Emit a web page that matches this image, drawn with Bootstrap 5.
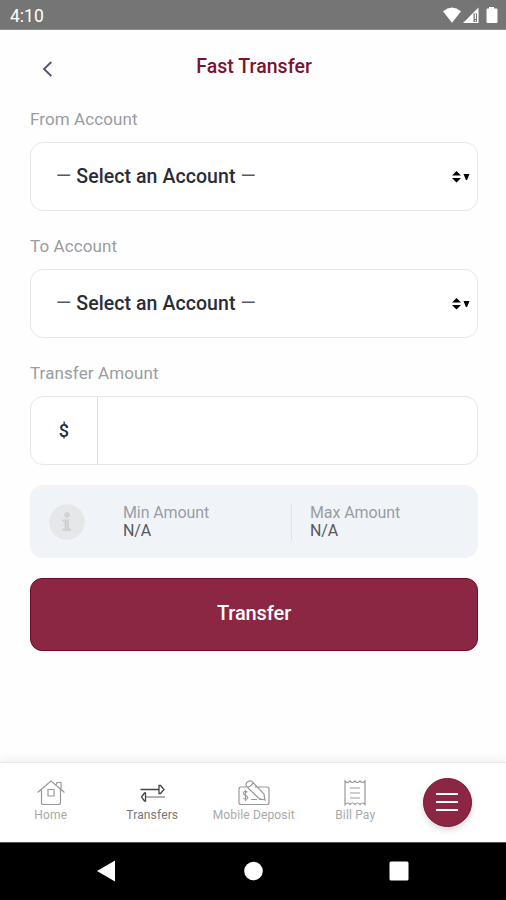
<!DOCTYPE html>
<html lang="en">
<head>
<meta charset="utf-8">
<meta name="viewport" content="width=device-width, initial-scale=1">
<title>Fast Transfer</title>
<link href="https://cdn.jsdelivr.net/npm/bootstrap@5.3.0/dist/css/bootstrap.min.css" rel="stylesheet">
<style>
body{font-family:Roboto,"Liberation Sans",sans-serif;height:900px;overflow:hidden;background:#fefefe}
svg{display:block;flex:none}
.status{height:30px;background:#757575;font-size:17.5px;line-height:30px;padding:2px 7px 0 10px;border-bottom:1px solid #8c8c8c}
.status svg{margin-top:-2px}
.topbar{height:72px;padding:0 30px}
.topbar .back{width:36px;padding:5px 0 0 12px}
.topbar h1{font-size:19.5px;font-weight:500;color:#7d1230;letter-spacing:.05px;padding:2px 34px 0 0}
.flabel{height:34px;line-height:34px;margin-bottom:6px;font-size:17px;color:#9a9ca2;letter-spacing:.1px}
.field{height:69px;border:1.5px solid #e7e7e8;border-radius:13px;background:#fff;margin-bottom:18px;color:#292d38;font-size:19.5px;font-weight:500;letter-spacing:.08px;overflow:hidden}
.picker{padding:1px 6px 0 25px}
.dash{font-weight:400;color:#55585f}
.prefix{width:67px;height:100%;border-right:1.5px solid #dfe0e1;font-size:18px}
.limits{height:73px;background:#f0f4f8;border-radius:13px;padding:1px 0 0 19px;margin:20px 0;font-size:16px;line-height:18px;letter-spacing:-.1px;color:#9a9da5}
.limits b{font-weight:400;color:#555862}
.limits .min{width:168.5px;margin-left:38px;height:37px;border-right:1.5px solid #dfe3e7}
.limits .max{margin-left:18.5px;height:37px}
.send,.send:hover{height:73px;border-radius:12px;background:#8b2743;border:1.5px solid #76082b;color:#fff;font-size:20px;font-weight:500;letter-spacing:-.1px;line-height:68px;padding:0 0 3px}
.tabs{height:80px;background:#fff;border-top:1px solid #e9e9e9;box-shadow:0 -3px 10px rgba(0,0,0,.06);font-size:12px;line-height:14px;color:#a9a9a9;letter-spacing:.15px}
.tabs .tab{width:101.5px;padding-top:16px}
.tabs .on{color:#777}
.menu,.menu:hover{width:49px;height:49px;background:#8b2743;border:1px solid #7c1233;box-shadow:0 3px 6px rgba(0,0,0,.15)}
.sysnav{height:58px;background:#000;border-top:1px solid #555}
</style>
</head>
<body class="d-flex flex-column">
<header class="status d-flex justify-content-between align-items-center text-white">
  <span>4:10</span>
  <svg width="58" height="20" viewBox="0 0 58 20" fill="#fff"><path d="M2 6.200Q11 -1 20 6.200L11.500 17.200Q11 17.700 10.500 17.200Z"/><path d="M22 18 37.500 2.500V18Z"/><path d="M32.500 8.500h3.500v8.500h-3.500z" fill="#757575"/><path d="M33.800 9h1.200v5h-1.200zM33.800 15h1.200v1.500h-1.200z"/><path d="M48 2h5v1.500h2.500q1 0 1 1V17q0 1-1 1h-9q-1 0-1-1V4.500q0-1 1-1H48z"/></svg>
</header>
<div class="topbar d-flex align-items-center">
  <div class="back"><svg width="12" height="18" viewBox="0 0 12 18" fill="none" stroke="#50536b" stroke-width="1.800"><path d="M9.300 2 2 9l7.300 7"/></svg></div>
  <h1 class="flex-fill text-center m-0">Fast Transfer</h1>
</div>
<main class="flex-fill d-flex flex-column" style="padding:0 28px 0 30px">
  <div class="flabel">From Account</div>
  <div class="field picker d-flex align-items-center justify-content-between" role="button">
    <span><span class="dash">—</span> Select an Account <span class="dash">—</span></span>
    <svg width="20" height="14" viewBox="0 0 20 14"><path d="M5.500 1 10 5.500H1zM1 8h9l-4.500 4.500zM12.500 4h6l-2.400 6h-1.200z"/></svg>
  </div>
  <div class="flabel">To Account</div>
  <div class="field picker d-flex align-items-center justify-content-between" role="button">
    <span><span class="dash">—</span> Select an Account <span class="dash">—</span></span>
    <svg width="20" height="14" viewBox="0 0 20 14"><path d="M5.500 1 10 5.500H1zM1 8h9l-4.500 4.500zM12.500 4h6l-2.400 6h-1.200z"/></svg>
  </div>
  <div class="flabel">Transfer Amount</div>
  <div class="field d-flex mb-0">
    <div class="prefix d-flex align-items-center justify-content-center">$</div>
  </div>
  <div class="limits d-flex align-items-center">
    <svg width="36" height="36" viewBox="0 0 36 36"><circle cx="18" cy="18" r="17.800" fill="#e5e7e9"/><circle cx="18" cy="11" r="2.700" fill="#d0d2d5"/><path d="M13.500 15.500h6.500v9h2v2.500h-8.500v-2.500h2v-6.500h-2z" fill="#d0d2d5"/></svg>
    <div class="min">Min Amount<br><b>N/A</b></div>
    <div class="max">Max Amount<br><b>N/A</b></div>
  </div>
  <button class="send btn w-100" type="button">Transfer</button>
</main>
<nav class="tabs d-flex text-center">
  <div class="tab d-flex flex-column align-items-center"><svg width="30" height="29" viewBox="0 0 30 29" fill="none" stroke="#999" stroke-width="1.200"><path d="M1.500 13.500 15 2 28.500 13.500M5.500 10.500v13q0 2 2 2h15q2 0 2-2V10.500M20 6l1-2.500h4v7M12 10.500h6v6.500h-6z"/></svg>Home</div>
  <div class="tab on d-flex flex-column align-items-center"><svg width="30" height="29" viewBox="0 0 30 29" fill="none" stroke-width="1.300"><path d="M28 18H8.500" stroke="#888"/><path d="M3.500 10.500H21.500M22 6.500v8h1.500l3.500-4-3.500-4zM8.500 14v8H7.500L4.500 18l3-4z" stroke="#444"/></svg>Transfers</div>
  <div class="tab d-flex flex-column align-items-center text-nowrap"><svg width="34" height="29" viewBox="0 0 34 29" fill="none" stroke="#999" stroke-width="1.200"><path d="M9 8H4q-2 0-2 2V23.500q0 2 2 2h26q2 0 2-2V10q0-2-2-2H18M9.500 7.500Q8 4 11 2.500q3-1.500 5 1L27 15l1 6-6-1.500zM10 8q4 0 6-4M14 20.500h6M22 20.500h6M10.500 13q-4-1.500-4 1 0 2 2 2.500 3 1 2 3-1 1.500-4 0M8.500 11v11"/></svg>Mobile Deposit</div>
  <div class="tab d-flex flex-column align-items-center"><svg width="26" height="29" viewBox="0 0 26 29" fill="none" stroke="#999" stroke-width="1.200"><path d="M3 2q2.500 3 5 0 2.500 3 5 0 2.500 3 5 0 2.500 3 5 0v23.500q-2.500-3-5 0-2.500-3-5 0-2.500-3-5 0-2.500-3-5 0zM8 9h10M8 14h10M8 19h10"/></svg>Bill Pay</div>
  <div class="flex-fill d-flex justify-content-center align-items-center" style="padding:0 18px 1px 0"><button type="button" aria-label="Menu" class="menu btn rounded-circle p-0 d-flex align-items-center justify-content-center"><svg width="22" height="20" viewBox="0 0 22 20" stroke="#fff" stroke-width="2"><path d="M0 2h22M0 10h22M0 18h22"/></svg></button></div>
</nav>
<footer class="sysnav d-flex align-items-center">
  <svg width="506" height="30" viewBox="0 0 506 30" fill="#fff"><path d="M97 14 115 3.500v21z"/><circle cx="253.500" cy="14" r="9.300"/><rect x="389.500" y="4.500" width="19" height="19" rx="1.500"/></svg>
</footer>
<script src="https://cdn.jsdelivr.net/npm/bootstrap@5.3.0/dist/js/bootstrap.bundle.min.js"></script>
</body>
</html>
